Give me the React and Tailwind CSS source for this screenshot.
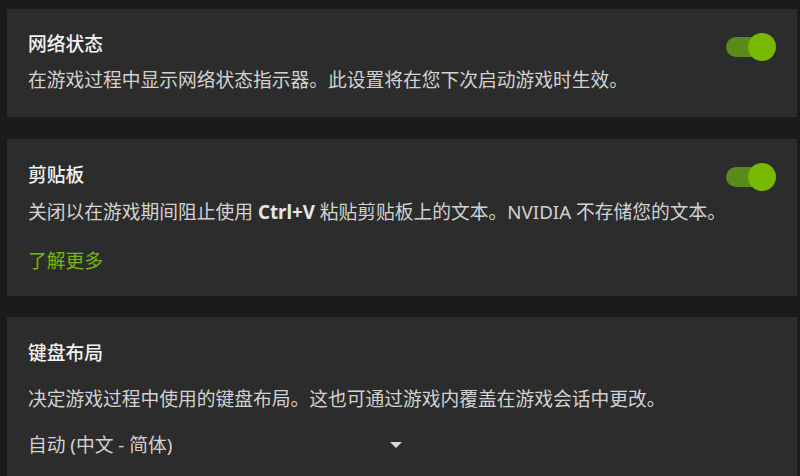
import { useState } from "react";

function Toggle({ on, onClick }) {
  return (
    <button
      onClick={onClick}
      className="relative mt-[24px] h-[28px] w-[50px] shrink-0 cursor-pointer"
    >
      <span
        className={
          "absolute left-0 top-[4px] h-[20px] w-[40px] rounded-full " +
          (on ? "bg-[#5a8a18]" : "bg-[#555555]")
        }
      />
      <span
        className={
          "absolute top-0 h-[28px] w-[28px] rounded-full " +
          (on ? "left-[22px] bg-[#76b900]" : "left-[-6px] bg-[#bdbdbd]")
        }
      />
    </button>
  );
}

export default function App() {
  const [netStatus, setNetStatus] = useState(true);
  const [clipboard, setClipboard] = useState(true);

  return (
    <main
      className="h-[476px] w-[800px] overflow-hidden bg-[#1b1b1b] pt-[9px] text-[18.75px] leading-[24px] text-[#d2d2d2]"
      style={{ fontFamily: '"Noto Sans", "Noto Sans CJK SC", sans-serif' }}
    >
      <section className="ml-[7px] flex w-[790px] justify-between bg-[#2c2c2c] pl-[21px] pr-[21px]">
        <div className="min-w-0 flex-1 pt-[23px] pb-[25px]">
          <h3 className="font-medium text-[#f2f2f2]">网络状态</h3>
          <p className="mt-[12px] whitespace-nowrap">在游戏过程中显示网络状态指示器。此设置将在您下次启动游戏时生效。</p>
        </div>
        <Toggle on={netStatus} onClick={() => setNetStatus(!netStatus)} />
      </section>

      <section className="ml-[7px] mt-[22px] flex w-[790px] justify-between bg-[#2c2c2c] pl-[21px] pr-[21px]">
        <div className="min-w-0 flex-1 pt-[24px] pb-[23px]">
          <h3 className="font-medium text-[#f2f2f2]">剪贴板</h3>
          <p className="mt-[13px] whitespace-nowrap">
            关闭以在游戏期间阻止使用 <span className="font-bold text-[#e6e6e6]">Ctrl+V</span> 粘贴剪贴板上的文本。NVIDIA 不存储您的文本。
          </p>
          <a href="#" className="mt-[25px] block w-fit text-[#76b900]">了解更多</a>
        </div>
        <Toggle on={clipboard} onClick={() => setClipboard(!clipboard)} />
      </section>

      <section className="ml-[7px] mt-[21px] w-[790px] bg-[#2c2c2c] pl-[21px] pr-[21px] pt-[24px] pb-[24px]">
        <h3 className="font-medium text-[#f2f2f2]">键盘布局</h3>
        <p className="mt-[22px] whitespace-nowrap">决定游戏过程中使用的键盘布局。这也可通过游戏内覆盖在游戏会话中更改。</p>
        <div className="mt-[22px] flex w-[380px] items-center justify-between">
          <span>自动 (中文 - 简体)</span>
          <svg width="12" height="6" viewBox="0 0 12 6" className="mr-[6px]">
            <path d="M0 0 H12 L6 6 Z" fill="#d8d8d8" />
          </svg>
        </div>
      </section>
    </main>
  );
}
